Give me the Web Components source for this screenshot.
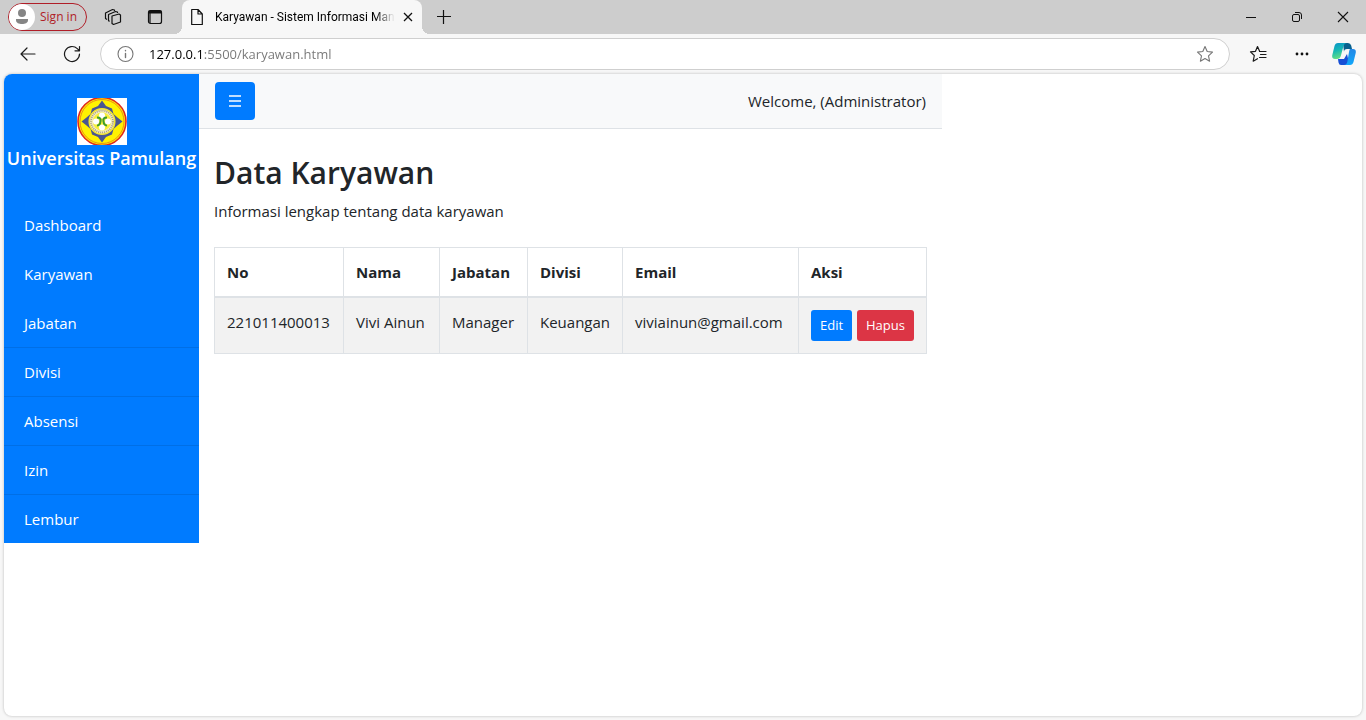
<!DOCTYPE html>
<html lang="id">
<head>
<meta charset="utf-8">
<meta name="viewport" content="width=device-width, initial-scale=1">
<title>Karyawan - Sistem Informasi Manajemen</title>
<style>
html, body { margin: 0; height: 100%; }
body { font-family: "Open Sans", "Noto Sans", sans-serif; font-size: 15px; line-height: 24px; color: #212529; }
</style>
</head>
<body>
<browser-window>
  <tab-strip slot="tabs" label="Karyawan - Sistem Informasi Man"></tab-strip>
  <address-bar slot="toolbar" url="127.0.0.1:5500/karyawan.html"></address-bar>
  <app-layout>
    <side-bar slot="side" heading="Universitas Pamulang">
      <nav-item>Dashboard</nav-item>
      <nav-item>Karyawan</nav-item>
      <nav-item lined>Jabatan</nav-item>
      <nav-item lined>Divisi</nav-item>
      <nav-item lined>Absensi</nav-item>
      <nav-item lined>Izin</nav-item>
      <nav-item>Lembur</nav-item>
    </side-bar>
    <top-bar slot="top">Welcome, (Administrator)</top-bar>
    <page-heading heading="Data Karyawan">Informasi lengkap tentang data karyawan</page-heading>
    <employee-table></employee-table>
  </app-layout>
</browser-window>

<script>
const define = (name, html) => {
  const template = document.createElement('template');
  template.innerHTML = html;
  customElements.define(name, class extends HTMLElement {
    constructor() {
      super();
      this.attachShadow({ mode: 'open' }).append(template.content.cloneNode(true));
    }
    connectedCallback() {
      this.shadowRoot.querySelectorAll('[data-from]').forEach(el => {
        const value = this.getAttribute(el.dataset.from) || '';
        if (el.localName === 'input') el.value = value; else el.textContent = value;
      });
    }
  });
};

define('browser-window', `
<style>
:host { display: flex; flex-direction: column; min-height: 100vh; background: #f7f7f7; }
main { flex: 1; margin: 0 4px 4px; background: #fff; border-radius: 8px; overflow: hidden; box-shadow: 0 0 3px rgba(0,0,0,.25); }
</style>
<slot name="tabs"></slot>
<slot name="toolbar"></slot>
<main><slot></slot></main>`);

define('tab-strip', `
<style>
:host { display: flex; height: 34px; background: #cdcdcd; color: #000; font-size: 12px; line-height: 16px; }
button { border: 0; padding: 0; background: none; font: inherit; color: inherit; display: flex; align-items: center; justify-content: center; }
svg { display: block; flex: none; fill: none; stroke: #111; }
.left { display: flex; align-items: center; width: 182px; box-sizing: border-box; padding-left: 8px; }
.sign { box-sizing: border-box; width: 79px; height: 28px; border: 1px solid #b01e28; border-radius: 14px; color: #b01e28; gap: 5px; justify-content: flex-start; white-space: nowrap; }
.square { width: 42px; height: 34px; }
.left .square:nth-child(2) { margin-left: 5px; }
.tab { position: relative; display: flex; align-items: center; box-sizing: border-box; width: 240px; padding-left: 9px; background: #f7f7f7; border-radius: 8px 8px 0 0; }
.tab::before, .tab::after { content: ""; position: absolute; bottom: 0; width: 8px; height: 8px; }
.tab::before { right: 100%; background: radial-gradient(circle at 0 0, transparent 8px, #f7f7f7 8px); }
.tab::after { left: 100%; background: radial-gradient(circle at 100% 0, transparent 8px, #f7f7f7 8px); }
.name { flex: none; margin-left: 12px; font-family: Roboto, "Open Sans", sans-serif; white-space: nowrap; -webkit-mask-image: linear-gradient(to left, transparent 0, #000 20px); mask-image: linear-gradient(to left, transparent 0, #000 20px); }
.close { width: 30px; height: 34px; margin-left: auto; }
.new { width: 44px; }
.window { display: flex; margin-left: auto; }
.window button { width: 46px; }
</style>
<div class="left">
  <button class="sign"><svg width="26" height="26"><circle cx="13" cy="13" r="13" fill="#fff" stroke="none"/><circle cx="13" cy="9" r="4" fill="#858585" stroke="none"/><path d="M7 15h12v1c0 3-3 4-6 4s-6-1-6-4z" fill="#858585" stroke="none"/></svg>Sign in</button>
  <button class="square" aria-label="Workspaces"><svg width="18" height="18" stroke-width="1.2" stroke-linejoin="round"><path d="M8 8l7-2 1.500 1v7L9.500 16.500 8 15.500zM5.500 13.500L4.500 12.500V6.500L11.500 3.500l2 .5v1M3 11.500l-1.500-1V5L8.500 1.500l2 .5v1"/></svg></button>
  <button class="square" aria-label="Tab actions"><svg width="16" height="16"><rect x="1.500" y="1.500" width="13" height="13" rx="2" stroke-width="1.200"/><path d="M1.500 3h13" stroke-width="3"/><path d="M3 4v10" stroke-width="1.200"/></svg></button>
</div>
<div class="tab">
  <svg width="12" height="18"><path d="M.7 1.500H7l4.300 4.500v10.500H.7zM7 1.500V6h4.300" stroke-width="1.200" stroke-linejoin="round"/></svg>
  <span class="name" data-from="label"></span>
  <button class="close" aria-label="Close tab"><svg width="10" height="10"><path d="M1 1l8 8M9 1L1 9" stroke-width="1.300"/></svg></button>
</div>
<button class="square new" aria-label="New tab"><svg width="16" height="16"><path d="M1 7.500h14M7.500 1v14" stroke-width="1.200"/></svg></button>
<div class="window">
  <button aria-label="Minimize"><svg width="11" height="11"><path d="M0 5.500h10" /></svg></button>
  <button aria-label="Restore"><svg width="12" height="12"><rect x="1.500" y="3.500" width="7" height="7" rx="1.500"/><path d="M4 1.500h4q2.500 0 2.500 2.500v4"/></svg></button>
  <button aria-label="Close"><svg width="12" height="12"><path d="M1 1l10 10M11 1L1 11" stroke-width="1.100"/></svg></button>
</div>`);

define('address-bar', `
<style>
:host { display: flex; align-items: center; height: 40px; padding-right: 2px; background: #f7f7f7; }
button { flex: none; border: 0; padding: 0; width: 44px; height: 32px; background: none; display: flex; align-items: center; justify-content: center; }
svg { display: block; fill: none; stroke: #1b1b1b; stroke-linecap: round; stroke-linejoin: round; }
.back { margin-left: 6px; }
.field { flex: 1; display: flex; align-items: center; box-sizing: border-box; height: 32px; margin: 0 6px; background: #fff; border: 1px solid #cfcfcf; border-radius: 16px; }
.field svg { stroke: #767676; }
.field button { width: 48px; }
input { flex: 1; min-width: 0; border: 0; outline: 0; padding: 0; font-family: inherit; font-size: 13px; line-height: 20px; color: transparent; background: linear-gradient(90deg, #000 54px, #767676 54px); -webkit-background-clip: text; background-clip: text; }
.copilot { width: 40px; }
</style>
<button class="back" aria-label="Back"><svg width="18" height="16"><path d="M16 8H2M8 2L2 8l6 6" stroke-width="1.200"/></svg></button>
<button aria-label="Refresh"><svg width="18" height="18"><path d="M16.500 9A7.500 7.500 0 1 1 14.300 3.700L16.300 5.700M16.500 1.500V5.800H12" stroke-width="1.200"/></svg></button>
<div class="field">
  <button aria-label="Site information"><svg width="18" height="18"><circle cx="9.500" cy="9" r="7.500" stroke-width="1.100"/><path d="M9.500 8.500v4M9.500 5.500v.2" stroke-width="1.400"/></svg></button>
  <input data-from="url" aria-label="Address" spellcheck="false">
  <button aria-label="Add to favorites"><svg width="18" height="18"><path d="M9 1.500l2.200 5 5.300.6-4 3.700 1.100 5.400L9 13.500l-4.600 2.700 1.100-5.400-4-3.700 5.300-.6z" stroke-width="1.100"/></svg></button>
</div>
<button aria-label="Favorites"><svg width="18" height="18"><path d="M10.500 6L8.500 1.500 6.500 6.300 1.500 6.900 5.300 10.500 4.200 16.200 8.500 13.700M10.500 6.500H17M11.500 9.500H17M10.500 12.500H17" stroke-width="1.200"/></svg></button>
<button aria-label="Settings and more"><svg width="14" height="4"><g fill="#111" stroke="none"><circle cx="2" cy="2" r="1.400"/><circle cx="7" cy="2" r="1.400"/><circle cx="12" cy="2" r="1.400"/></g></svg></button>
<button class="copilot" aria-label="Copilot"><svg width="24" height="24" viewBox="0 0 24 24"><defs><linearGradient id="a" x2=".3" y2="1"><stop stop-color="#0891c9"/><stop offset=".5" stop-color="#16b7b5"/><stop offset="1" stop-color="#63df86"/></linearGradient><linearGradient id="b" x2="0" y2="1"><stop stop-color="#2387e5"/><stop offset="1" stop-color="#10a8fb"/></linearGradient></defs><g stroke="none"><path d="M11 1h5q2.500 0 3.200 2.500L20 7h-5q-3 0-3 3z" fill="#08618e"/><path d="M6 17h6l3-5 2 9q-1 2-3 2H9q-2 0-2.500-2.500z" fill="#174fd5"/><path d="M6 1h9q-2.500 0-3.500 3L8.800 14Q8 17 5 17H3q-3.500 0-2.700-4L2.500 4Q3.300 1 6 1z" fill="url(#a)"/><path d="M18 7h3q3.500 0 2.700 4l-2.200 9q-.8 3-3.500 3h-6q2.500 0 3.300-3l1.700-10q.5-3 1-3z" fill="url(#b)"/></g></svg></button>`);

define('app-layout', `
<style>
:host { display: flex; align-items: flex-start; }
.column { display: flex; flex-direction: column; }
.content { padding: 24px 15px; }
</style>
<slot name="side"></slot>
<div class="column"><slot name="top"></slot><section class="content"><slot></slot></section></div>`);

define('side-bar', `
<style>
:host { display: block; flex: none; width: 195px; background: #007bff; color: #fff; }
header { display: flex; flex-direction: column; align-items: center; padding: 24px 0 30px; }
h1 { margin: 0; font-size: 18px; line-height: 26px; font-weight: 600; white-space: nowrap; }
svg { display: block; }
</style>
<header>
  <svg width="50" height="47" viewBox="0 0 50 47" role="img" aria-label="Logo">
    <path fill="#fff" d="M0 0h50v47H0z"/>
    <circle cx="25" cy="23.500" r="24" fill="#fff200" stroke="#e0281f" stroke-width="1.600"/>
    <circle cx="25" cy="23.500" r="22" fill="#fff200" stroke="#e8731f" stroke-width=".8"/>
    <path d="M25 2.500l4 5.500 6 2.500 1.500 5.500 4 3.500 5 4-5 4-4 3.500-1.500 5.500-6 2.500-4 5.500-4-5.500-6-2.500-1.500-5.500-4-3.500-5-4 5-4 4-3.500 1.500-5.500 6-2.500z" fill="#4a5690"/>
    <circle cx="25" cy="23.500" r="12.800" fill="#f4ecc3" stroke="#f5e72f" stroke-width="1.500"/>
    <circle cx="25" cy="23.500" r="11" fill="none" stroke="#aaa17c" stroke-width="1.800" stroke-dasharray="1 1"/>
    <circle cx="25" cy="23.500" r="9.200" fill="#f7ef3a"/>
    <g fill="#fff"><circle cx="25" cy="17.500" r="3"/><circle cx="25" cy="29.500" r="3"/><circle cx="19" cy="23.500" r="3"/><circle cx="31" cy="23.500" r="3"/></g>
    <path d="M20 19.500q4.500 0 3.500 4-.5 4-3.500 4M30 19.500q-4.500 0-3.500 4 .5 4 3.500 4" fill="none" stroke="#3f9b2f" stroke-width="2"/>
  </svg>
  <h1 data-from="heading"></h1>
</header>
<nav><slot></slot></nav>`);

define('nav-item', `
<style>
:host { display: block; box-sizing: border-box; height: 49px; border-bottom: 1px solid transparent; }
:host([lined]) { border-bottom-color: #006fe6; }
:host(:last-child) { height: 48px; border: 0; }
a { display: block; padding: 12px 20px; color: #fff; text-decoration: none; }
</style>
<a href="#"><slot></slot></a>`);

define('top-bar', `
<style>
:host { display: flex; align-items: center; justify-content: space-between; padding: 8px 16px; background: #f8f9fa; border-bottom: 1px solid #dee2e6; }
button { width: 40px; height: 38px; padding: 0; border: 0; border-radius: 4px; background: #007bff; display: flex; align-items: center; justify-content: center; }
svg { display: block; }
</style>
<button aria-label="Menu"><svg width="14" height="12"><path d="M1 1h12M1 6h12M1 11h12" stroke="#fff" stroke-width="1.400"/></svg></button>
<span><slot></slot></span>`);

define('page-heading', `
<style>
:host { display: block; }
h2 { margin: 0 0 6px; font-size: 30px; line-height: 40px; font-weight: 600; }
p { margin: 0 0 24px; }
</style>
<h2 data-from="heading"></h2><p><slot></slot></p>`);

define('employee-table', `
<style>
:host { display: block; }
table { table-layout: fixed; width: 713px; border-collapse: collapse; }
th, td { box-sizing: border-box; padding: 12px; border: 1px solid #dee2e6; text-align: left; vertical-align: top; white-space: nowrap; }
th { border-bottom-width: 2px; font-weight: 700; }
td { background: #f2f2f2; }
.actions { display: flex; gap: 5px; }
button { flex: none; height: 31px; padding: 0; border: 0; border-radius: 3px; color: #fff; background: #007bff; font-family: inherit; font-size: 13px; line-height: 21px; width: 41px; }
.delete { background: #dc3545; width: 57px; }
</style>
<table>
  <colgroup><col style="width:129px"><col style="width:96px"><col style="width:88px"><col style="width:95px"><col style="width:176px"><col style="width:128px"></colgroup>
  <thead><tr><th>No</th><th>Nama</th><th>Jabatan</th><th>Divisi</th><th>Email</th><th>Aksi</th></tr></thead>
  <tbody><tr><td>221011400013</td><td>Vivi Ainun</td><td>Manager</td><td>Keuangan</td><td>viviainun@gmail.com</td><td><div class="actions"><button>Edit</button><button class="delete">Hapus</button></div></td></tr></tbody>
</table>`);
</script>
</body>
</html>
